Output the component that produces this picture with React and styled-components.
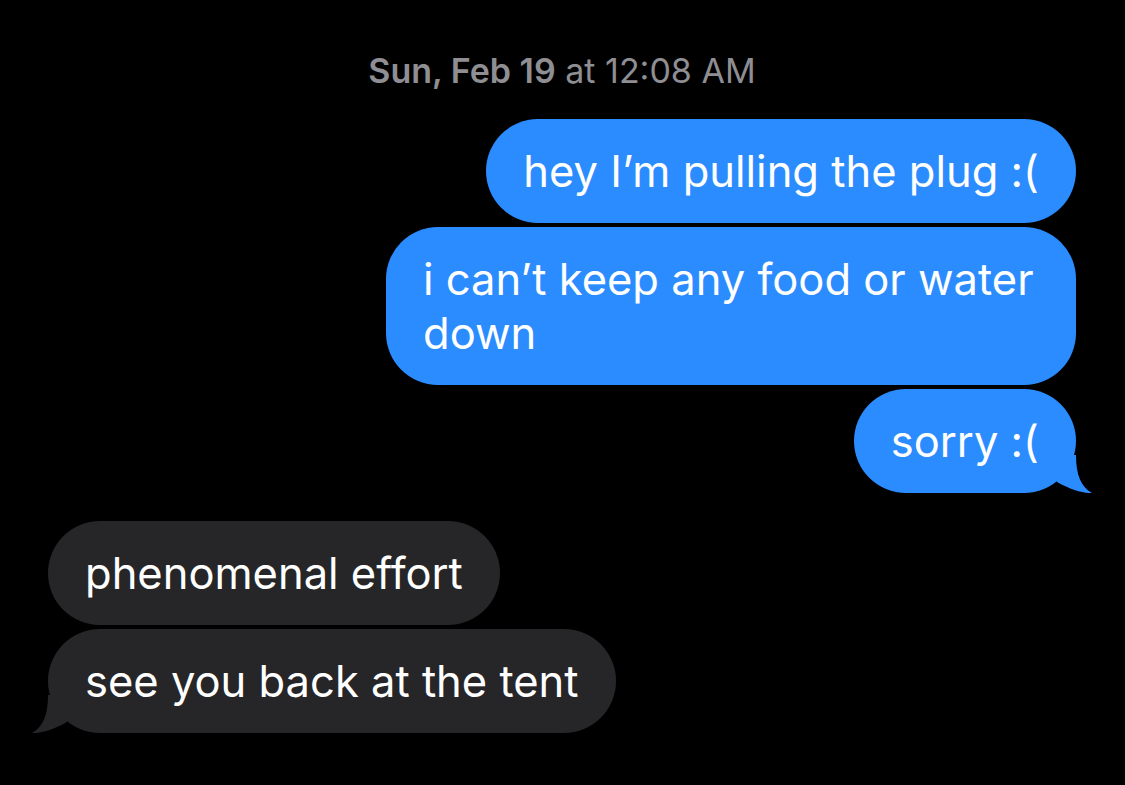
import React from 'react';
import styled, { createGlobalStyle } from 'styled-components';

const GlobalStyle = createGlobalStyle`
  html, body {
    margin: 0;
    padding: 0;
    background: #000;
  }
  body {
    font-family: Inter, "Noto Sans", "Liberation Sans", sans-serif;
    -webkit-font-smoothing: antialiased;
  }
`;

const Thread = styled.div`
  width: 1125px;
  height: 785px;
  box-sizing: border-box;
  padding: 50px 49px 0 48px;
  display: flex;
  flex-direction: column;
  overflow: hidden;
`;

const Stamp = styled.div`
  text-align: center;
  color: #8e8e93;
  font-size: 34px;
  line-height: 42px;
  margin-bottom: 27px;

  b {
    font-weight: 600;
  }
`;

const Group = styled.div`
  display: flex;
  flex-direction: column;
  align-items: ${(p) => (p.$sent ? 'flex-end' : 'flex-start')};
  gap: 4px;
  margin-bottom: 28px;
`;

const Bubble = styled.div`
  position: relative;
  max-width: 616px;
  padding: 25px 37px;
  border-radius: 52px;
  background: ${(p) => (p.$sent ? '#2a8cff' : '#262629')};
  color: #fff;
  font-size: 43.5px;
  line-height: 54px;
  letter-spacing: 0;
`;

const TailSvg = styled.svg`
  position: absolute;
  bottom: 0;
  width: 63px;
  height: 38px;
  ${(p) => (p.$sent ? 'right: -16px;' : 'left: -16px; transform: scaleX(-1);')}
`;

function Tail({ sent }) {
  return (
    <TailSvg $sent={sent} viewBox="0 0 63 38">
      <path
        d="M28 0 H47 C47 20 52 32 63 38 C55 38.5 42 35 28 27 Z"
        fill={sent ? '#2a8cff' : '#262629'}
      />
    </TailSvg>
  );
}

const sent = [
  'hey I\u2019m pulling the plug :(',
  'i can\u2019t keep any food or water down',
  'sorry :(',
];

const received = ['phenomenal effort', 'see you back at the tent'];

export default function App() {
  return (
    <>
      <GlobalStyle />
      <Thread>
        <Stamp>
          <b>Sun, Feb 19</b> at 12:08 AM
        </Stamp>
        <Group $sent>
          {sent.map((t, i) => (
            <Bubble key={i} $sent>
              {t}
              {i === sent.length - 1 && <Tail sent />}
            </Bubble>
          ))}
        </Group>
        <Group>
          {received.map((t, i) => (
            <Bubble key={i}>
              {t}
              {i === received.length - 1 && <Tail />}
            </Bubble>
          ))}
        </Group>
      </Thread>
    </>
  );
}
